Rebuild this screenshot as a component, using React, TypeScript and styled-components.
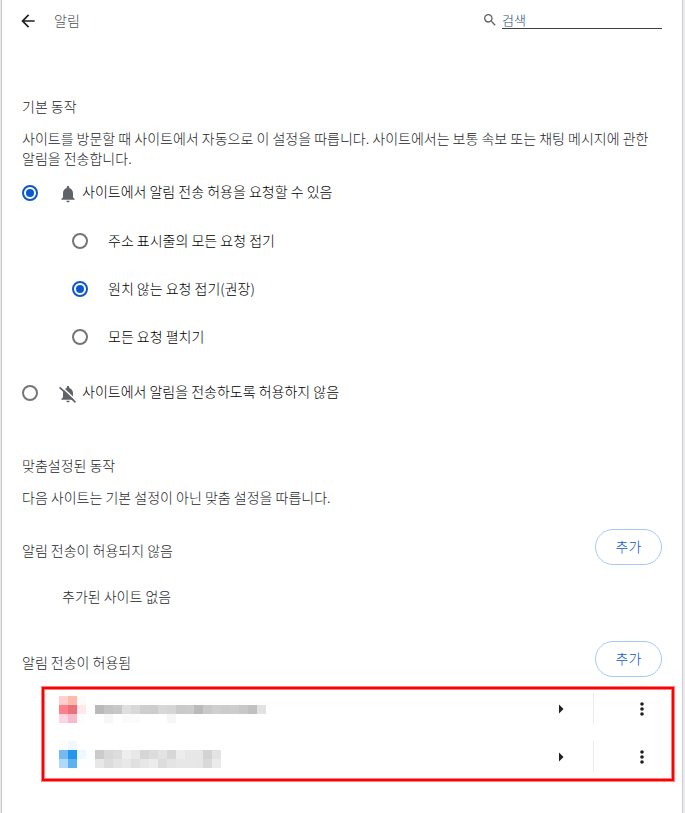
import React from "react";
import styled, { createGlobalStyle } from "styled-components";

const GlobalStyle = createGlobalStyle`
  * { box-sizing: border-box; }
  html { background: #e9eaeb; }
  body {
    margin: 0;
    font-family: "Noto Sans CJK KR", "Noto Sans", sans-serif;
    font-size: 14px;
    font-weight: 300;
    line-height: 20px;
    color: #232528;
  }
  h1, h2, h3, p, ul { margin: 0; padding: 0; font-size: inherit; font-weight: inherit; }
  button, input { font: inherit; }
`;

const Page = styled.main`
  min-height: 100vh;
  margin: 0 2px 0 1px;
  padding: 0 20px;
  background: #fff;
  border-left: 1px solid #c8c8c8;
  border-right: 1px solid #cdcdcd;
`;

const Header = styled.header`
  display: flex;
  align-items: center;
  height: 42px;
  margin-bottom: 54px;
`;

const IconButton = styled.button`
  display: flex;
  align-items: center;
  justify-content: center;
  width: 24px;
  height: 24px;
  padding: 0;
  border: 0;
  background: none;
  color: #202124;
  cursor: pointer;
`;

const BackButton = styled(IconButton)`
  margin: 0 14px 0 -6px;
`;

const Title = styled.h1`
  flex: 1;
  padding-bottom: 2px;
  color: #4d5156;
`;

const Search = styled.label`
  display: flex;
  align-items: center;
  gap: 4px;
  margin-bottom: 2px;
  color: #5f6368;
`;

const SearchInput = styled.input`
  width: 160px;
  height: 18px;
  padding: 0;
  border: 0;
  border-bottom: 1px solid #3c4043;
  background: none;
  outline: none;
  font-size: 13px;
  line-height: 16px;
  &::placeholder { color: #1c4a75; opacity: 1; }
`;

const Heading = styled.h2`
  margin-bottom: 12px;
`;

const DefaultBehavior = styled.section`
  margin-bottom: 38px;
`;

const CustomBehavior = styled.section`
  margin-bottom: 22px;
`;

const Options = styled.div`
  margin-top: 1px;
`;

const RadioRow = styled.label<{ $nested?: boolean }>`
  display: flex;
  align-items: center;
  height: 48px;
  padding-left: ${(p) => (p.$nested ? 50 : 0)}px;
  color: #000;
`;

const NestedGroup = styled.div`
  margin-bottom: 8px;
`;

const Radio = styled.input`
  appearance: none;
  display: grid;
  place-items: center;
  flex: none;
  width: 16px;
  height: 16px;
  margin: 0 20px 0 0;
  border: 2px solid #757575;
  border-radius: 50%;
  &:checked { border-color: #0b57d0; }
  &:checked::after {
    content: "";
    width: 8px;
    height: 8px;
    border-radius: 50%;
    background: #0b57d0;
  }
`;

const RadioIcon = styled.svg`
  flex: none;
  width: 20px;
  height: 20px;
  margin: 2px 4px 0 0;
  fill: #5f6368;
`;

const RadioText = styled.span<{ $raised?: boolean }>`
  padding-bottom: ${(p) => (p.$raised ? 4 : 2)}px;
`;

const ListHeader = styled.div`
  display: flex;
  align-items: flex-end;
  justify-content: space-between;
`;

const ListTitle = styled.h3`
  padding-bottom: 5px;
`;

const AddButton = styled.button`
  min-width: 67px;
  height: 36px;
  padding: 0 16px 2px;
  border: 1px solid #a8c7fa;
  border-radius: 18px;
  background: #fff;
  color: #0b57d0;
  cursor: pointer;
`;

const Empty = styled.p`
  padding: 21px 0 35px 40px;
`;

const SiteList = styled.ul`
  display: flex;
  flex-direction: column;
  gap: 8px;
  margin: 10px -12px 0 20px;
  padding: 0 0 2px 15px;
  border: 2px solid #f00;
  box-shadow: 0 0 0 1px #ff8080, inset 0 0 0 1px #ff8080;
  list-style: none;
`;

const SiteRow = styled.li`
  display: flex;
  align-items: center;
  height: 40px;
`;

const SiteName = styled.div`
  flex: 1;
  height: 40px;
`;

const MoreCell = styled.div`
  display: flex;
  align-items: center;
  height: 32px;
  margin-left: 20px;
  padding: 0 18px 0 36px;
  border-left: 1px solid #ececec;
`;

type Cells = string[][];

const redSite: Cells = [
  ["#ffd0cb", "#ffbab0", "#fffafa", "#fefefe", "#fdfdfd"],
  ["#ff808a", "#e9717e", "#ffe9eb", "#fefefe", "#b9b9b9", "#c3c3c3", "#c7c7c7", "#dfdfdf", "#d8d8d8", "#cecece", "#cccccc", "#d7d7d7", "#d5d5d5", "#c9c9c9", "#cbcbcb", "#bababa", "#c9c9c9", "#cfcfcf", "#cccccc", "#cdcdcd", "#c8c8c8", "#c1c1c1", "#e2e2e2"],
  ["#fdd5e2", "#f8b9ca", "#fefcfd", "#ffffff", "#ffffff", "#f7f7f7", "#ffffff", "#fbfbfb", "#fbfbfb", "#ffffff", "#ffffff", "#ffffff", "#f6f6f6"],
];

const blueSite: Cells = [
  ["#fcfdff", "#f0f8ff"],
  ["#73b9f2", "#2496ed", "#eff8ff", "#fdfeff", "#cbcbcb", "#d8d8d8", "#dddddd", "#eeeeee", "#e8e8e8", "#d6d6d6", "#dcdcdc", "#e3e3e3", "#d7d7d7", "#ececec", "#e7e7e7", "#e7e7e7", "#d3d3d3", "#e3e3e3"],
  ["#aed9fa", "#5eb1f0", "#fcfeff", "#fefefe", "#e7e7e7", "#dcdcdc", "#e4e4e4", "#e8e8e8", "#e0e0e0", "#e7e7e7", "#ececec", "#dcdcdc", "#e4e4e4", "#e7e7e7", "#e7e7e7", "#e6e6e6", "#d9d9d9", "#ebebeb"],
];

function Mosaic({ cells, top }: { cells: Cells; top: number }) {
  return (
    <svg width="207" height="40" shapeRendering="crispEdges" aria-hidden="true">
      {cells.map((row, y) =>
        row.map((fill, x) => (
          <rect key={`${x}-${y}`} x={x * 9} y={top + y * 9} width="9" height="9" fill={fill} />
        ))
      )}
    </svg>
  );
}

function Site({ cells, top }: { cells: Cells; top: number }) {
  return (
    <SiteRow>
      <SiteName>
        <Mosaic cells={cells} top={top} />
      </SiteName>
      <IconButton aria-label="세부정보">
        <svg width="24" height="24" viewBox="0 0 24 24" fill="currentColor">
          <path d="M10 7.5 14.5 12 10 16.5z" />
        </svg>
      </IconButton>
      <MoreCell>
        <IconButton aria-label="추가 작업">
          <svg width="24" height="24" viewBox="0 0 24 24" fill="currentColor">
            <circle cx="12" cy="7" r="1.8" />
            <circle cx="12" cy="12" r="1.8" />
            <circle cx="12" cy="17" r="1.8" />
          </svg>
        </IconButton>
      </MoreCell>
    </SiteRow>
  );
}

const bell =
  "M12 22c1.1 0 2-.9 2-2h-4c0 1.1.89 2 2 2zm6-6v-5c0-3.07-1.64-5.64-4.5-6.32V4c0-.83-.67-1.5-1.5-1.5s-1.5.67-1.5 1.5v.68C7.63 5.36 6 7.92 6 11v5l-2 2v1h16v-1l-2-2z";

const requestModes = ["주소 표시줄의 모든 요청 접기", "원치 않는 요청 접기(권장)", "모든 요청 펼치기"];

export default function App() {
  return (
    <>
      <GlobalStyle />
      <Page>
        <Header>
          <BackButton aria-label="뒤로">
            <svg width="20" height="20" viewBox="0 0 24 24" fill="currentColor">
              <path d="M20 11H7.83l5.59-5.59L12 4l-8 8 8 8 1.41-1.41L7.83 13H20v-2z" />
            </svg>
          </BackButton>
          <Title>알림</Title>
          <Search>
            <svg width="16" height="16" viewBox="0 0 24 24" fill="currentColor" aria-hidden="true">
              <path d="M15.5 14h-.79l-.28-.27A6.47 6.47 0 0 0 16 9.5 6.5 6.5 0 1 0 9.5 16c1.61 0 3.09-.59 4.23-1.57l.27.28v.79l5 4.99L20.49 19l-4.99-5zm-6 0C7.01 14 5 11.99 5 9.5S7.01 5 9.5 5 14 7.01 14 9.5 11.99 14 9.5 14z" />
            </svg>
            <SearchInput type="text" placeholder="검색" aria-label="검색" />
          </Search>
        </Header>

        <DefaultBehavior>
          <Heading>기본 동작</Heading>
          <p>
            사이트를 방문할 때 사이트에서 자동으로 이 설정을 따릅니다. 사이트에서는 보통 속보 또는 채팅 메시지에 관한
            알림을 전송합니다.
          </p>
          <Options>
            <RadioRow>
              <Radio type="radio" name="permission" defaultChecked />
              <RadioIcon viewBox="0 0 24 24">
                <path d={bell} />
              </RadioIcon>
              <RadioText $raised>사이트에서 알림 전송 허용을 요청할 수 있음</RadioText>
            </RadioRow>
            <NestedGroup>
              {requestModes.map((label, i) => (
                <RadioRow $nested key={label}>
                  <Radio type="radio" name="requests" defaultChecked={i === 1} />
                  <RadioText>{label}</RadioText>
                </RadioRow>
              ))}
            </NestedGroup>
            <RadioRow>
              <Radio type="radio" name="permission" />
              <RadioIcon viewBox="0 0 24 24">
                <path d={bell} />
                <path d="M4 3 22.5 20.5" stroke="#fff" strokeWidth="2" />
                <path d="M2 4 21 22" stroke="#5f6368" strokeWidth="2" />
              </RadioIcon>
              <RadioText $raised>사이트에서 알림을 전송하도록 허용하지 않음</RadioText>
            </RadioRow>
          </Options>
        </DefaultBehavior>

        <CustomBehavior>
          <Heading>맞춤설정된 동작</Heading>
          <p>다음 사이트는 기본 설정이 아닌 맞춤 설정을 따릅니다.</p>
        </CustomBehavior>

        <ListHeader>
          <ListTitle>알림 전송이 허용되지 않음</ListTitle>
          <AddButton>추가</AddButton>
        </ListHeader>
        <Empty>추가된 사이트 없음</Empty>

        <ListHeader>
          <ListTitle>알림 전송이 허용됨</ListTitle>
          <AddButton>추가</AddButton>
        </ListHeader>
        <SiteList>
          <Site cells={redSite} top={7} />
          <Site cells={blueSite} top={4} />
        </SiteList>
      </Page>
    </>
  );
}
